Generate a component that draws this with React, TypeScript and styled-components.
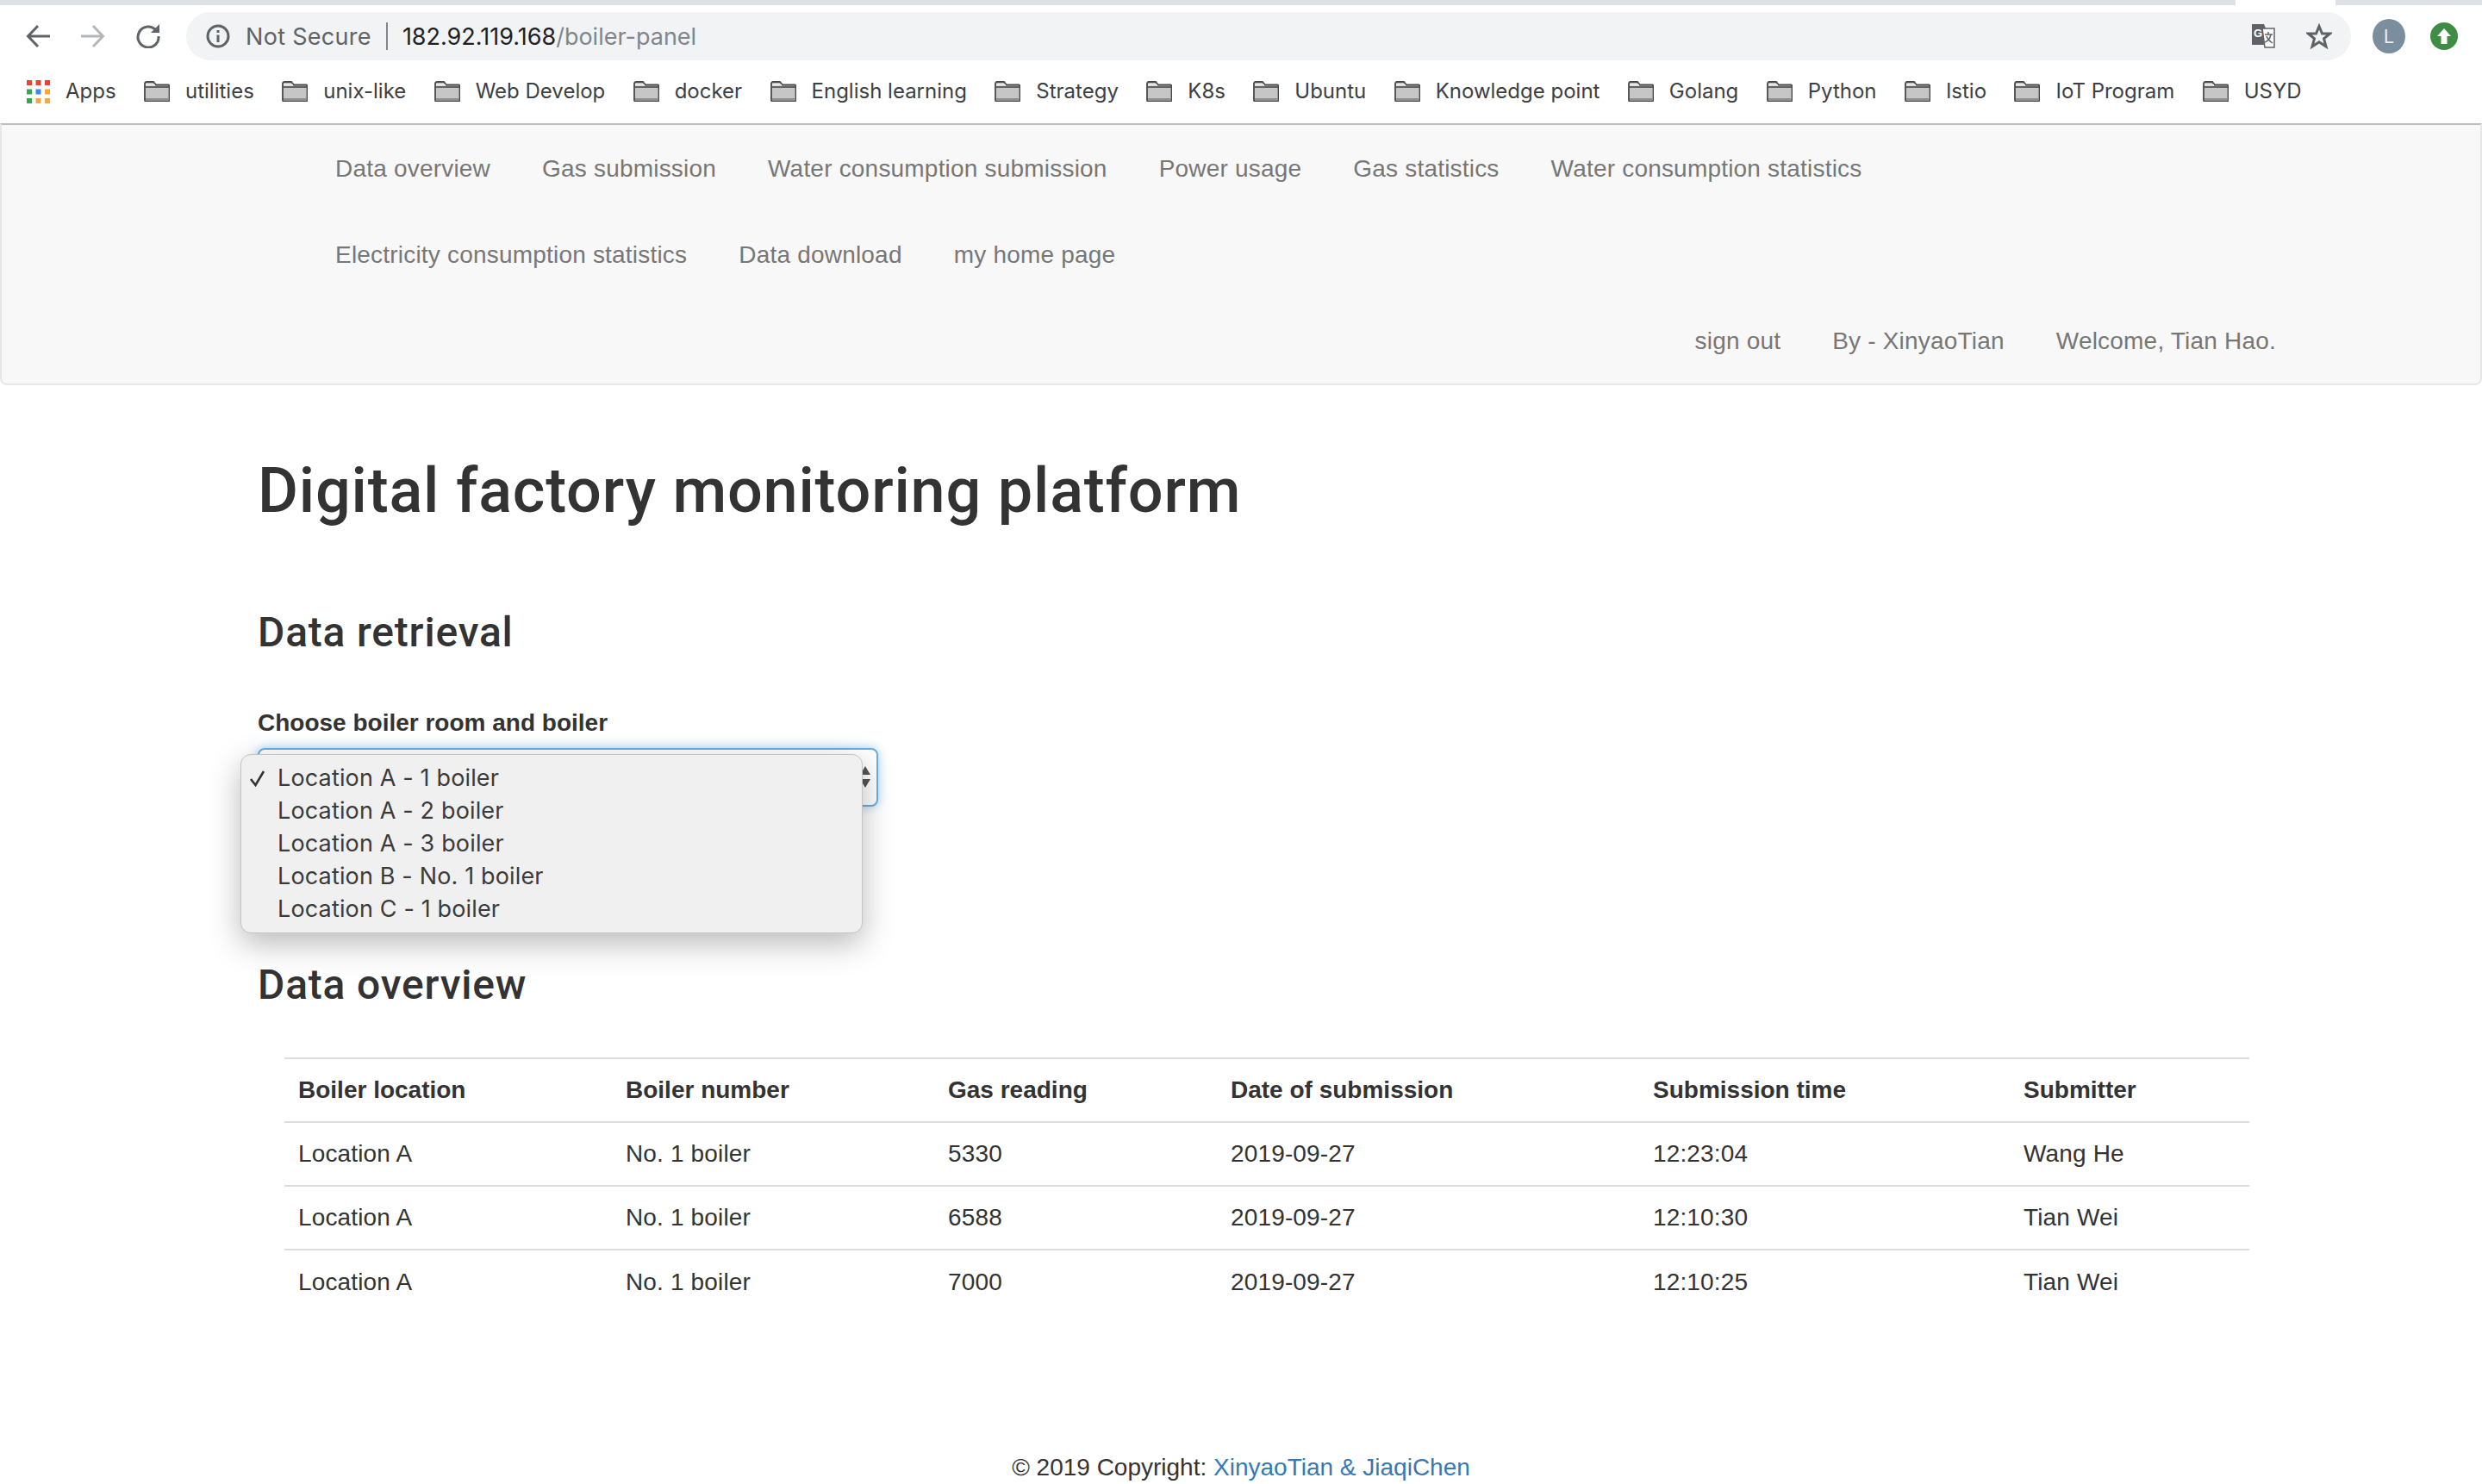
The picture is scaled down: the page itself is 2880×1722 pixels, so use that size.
import React from 'react';
import styled, { createGlobalStyle } from 'styled-components';

const GlobalStyle = createGlobalStyle`
  html, body {
    margin: 0;
    padding: 0;
    background: #fff;
    overflow: hidden;
  }
  body {
    font-family: "Liberation Sans", Arial, sans-serif;
    font-size: 28px;
    line-height: 40px;
    color: #333;
  }
  * { box-sizing: border-box; }
`;

const Page = styled.div`
  width: 2880px;
  height: 1722px;
  display: flex;
  flex-direction: column;
`;

// --- browser chrome ---

const TabStrip = styled.div`
  height: 6px;
  display: flex;
  background: #dee1e6;
  padding-left: 2594px;
`;

const ActiveTab = styled.div`
  width: 116px;
  height: 6px;
  background: #fff;
`;

const Toolbar = styled.div`
  height: 70px;
  padding: 8px 28px 0 30px;
  display: flex;
  align-items: flex-start;
  background: #fff;
`;

const NavIcons = styled.div`
  height: 56px;
  display: flex;
  align-items: center;
  gap: 36px;
  width: 186px;
`;

const Omnibox = styled.div`
  width: 2512px;
  height: 56px;
  border-radius: 28px;
  background: #f1f3f4;
  display: flex;
  align-items: center;
  padding: 0 20px 0 23px;
  font-family: Inter, "Noto Sans", sans-serif;
  font-size: 27px;
`;

const NotSecure = styled.span`
  color: #5f6368;
  margin: 2px 0 0 18px;
  font-size: 27px;
  letter-spacing: 0.3px;
`;

const Divider = styled.span`
  width: 2px;
  height: 32px;
  background: #80868b;
  margin: 0 17px;
`;

const Host = styled.span`
  color: #202124;
  margin-top: 2px;
`;

const UrlPath = styled.span`
  color: #80868b;
  margin-top: 2px;
`;

const OmniActions = styled.div`
  margin-left: auto;
  margin-right: 2px;
  display: flex;
  align-items: center;
  gap: 36px;
`;

const Avatar = styled.div`
  margin: 8px 0 0 25px;
  width: 38px;
  height: 40px;
  border-radius: 50%;
  background: #7b8e9e;
  color: #e8edf1;
  font-family: Inter, sans-serif;
  font-size: 22px;
  line-height: 40px;
  text-align: center;
`;

const UpdateBadge = styled.div`
  margin: 12px 0 0 29px;
  width: 32px;
  height: 32px;
  border-radius: 50%;
  background: #3f8c45;
  display: flex;
  align-items: center;
  justify-content: center;
`;

const BookmarkBar = styled.div`
  height: 67px;
  padding: 0 0 7px 31px;
  display: flex;
  align-items: center;
  background: #fff;
  font-family: Inter, "Noto Sans", sans-serif;
  font-size: 24px;
  color: #3c4043;
`;

const Bookmark = styled.div`
  display: flex;
  align-items: center;
  gap: 18px;
  margin-right: 32.4px;
`;

// --- site navbar ---

const Navbar = styled.nav`
  height: 304px;
  background: #f8f8f8;
  border: 2px solid #e7e7e7;
  border-top-color: #bdbdbd;
  border-radius: 0 0 8px 8px;
  padding-left: 357px;
  padding-right: 207px;
  font-size: 28px;
  line-height: 40px;
  color: #777;
  letter-spacing: 0.2px;
`;

const NavRow = styled.div<{ $right?: boolean }>`
  display: flex;
  justify-content: ${p => (p.$right ? 'flex-end' : 'flex-start')};
`;

const NavLink = styled.a`
  display: block;
  padding: 31px 30px 29px;
  white-space: nowrap;
`;

// --- content ---

const Container = styled.main`
  padding-left: 299px;
  padding-right: 270px;
  position: relative;
`;

const Title = styled.h1`
  margin: 83px 0 0;
  font-family: Roboto, "Liberation Sans", sans-serif;
  font-size: 72px;
  line-height: 79px;
  font-weight: 500;
  letter-spacing: 0.8px;
`;

const Heading = styled.h2<{ $top: number }>`
  margin: ${p => p.$top}px 0 0;
  font-family: Roboto, "Liberation Sans", sans-serif;
  font-size: 48px;
  line-height: 53px;
  font-weight: 500;
  letter-spacing: 0.8px;
`;

const FieldLabel = styled.label`
  display: block;
  margin-top: 59px;
  font-weight: 700;
  font-size: 28px;
  line-height: 40px;
`;

const SelectWrap = styled.div`
  position: relative;
  margin-top: 9px;
  width: 720px;
  height: 68px;
`;

const SelectBox = styled.div`
  height: 68px;
  border: 2px solid #66afe9;
  border-radius: 8px;
  background: #fff;
  box-shadow: 0 0 12px rgba(102, 175, 233, 0.6);
  display: flex;
  align-items: center;
  justify-content: flex-end;
  padding-right: 7px;
`;

const OptionMenu = styled.ul`
  position: absolute;
  left: -20px;
  top: 7px;
  width: 722px;
  height: 208px;
  margin: 0;
  padding: 8px 0 0;
  list-style: none;
  background: #f0f0f0;
  border: 1px solid #c4c4c4;
  border-radius: 12px;
  box-shadow: 0 12px 36px rgba(0, 0, 0, 0.28);
  font-family: Inter, "Noto Sans", sans-serif;
  font-size: 27px;
  letter-spacing: 0.15px;
  color: #3b3b3b;
  z-index: 2;
`;

const Option = styled.li`
  position: relative;
  height: 38px;
  line-height: 38px;
  padding-left: 42px;
`;

const CheckMark = styled.span`
  position: absolute;
  left: 9px;
  top: 0;
  display: flex;
  align-items: center;
  height: 38px;
`;

const DataTable = styled.table`
  margin: 58px 0 0 31px;
  width: 2280px;
  table-layout: fixed;
  border-collapse: collapse;
  font-size: 28px;
  line-height: 40px;
`;

const Col = styled.col<{ $w: number }>`
  width: ${p => p.$w}px;
`;

const HeadCell = styled.th`
  padding: 16px;
  height: 74px;
  text-align: left;
  font-weight: 700;
  border-top: 2px solid #ddd;
  border-bottom: 2px solid #ddd;
`;

const Cell = styled.td`
  padding: 16px;
  height: 74px;
  border-top: 2px solid #ddd;
  letter-spacing: 0.15px;
`;

const Footer = styled.footer`
  margin-top: auto;
  padding-bottom: 1px;
  height: 38px;
  line-height: 38px;
  text-align: center;
  font-size: 28px;
`;

const FooterLink = styled.a`
  color: #337ab7;
`;

// --- drawn icons ---

const BackIcon = ({ color }: { color: string }) => (
  <svg width="28" height="28" viewBox="0 0 28 28" fill="none" stroke={color} strokeWidth="3">
    <path d="M28 14H3M14 2L2.5 14L14 26" />
  </svg>
);

const ForwardIcon = ({ color }: { color: string }) => (
  <svg width="28" height="28" viewBox="0 0 28 28" fill="none" stroke={color} strokeWidth="3">
    <path d="M0 14H25M14 2L25.5 14L14 26" />
  </svg>
);

const ReloadIcon = () => (
  <svg width="28" height="28" viewBox="0 0 28 28" fill="none">
    <path d="M23 7A12 12 0 1 0 26 14" stroke="#5f6368" strokeWidth="3" />
    <path d="M17 10H27V0Z" fill="#5f6368" />
  </svg>
);

const InfoIcon = () => (
  <svg width="28" height="28" viewBox="0 0 28 28" fill="none" stroke="#5f6368" strokeWidth="3">
    <circle cx="14" cy="14" r="12" />
    <path d="M14 12.5V21M14 7V10" />
  </svg>
);

const TranslateIcon = () => (
  <svg width="28" height="30" viewBox="0 0 28 30">
    <path d="M1 1H15L25 25H1Z" fill="#5f6368" />
    <path d="M13 6H27V28H16Z" fill="#fff" stroke="#5f6368" strokeWidth="1.5" />
    <text x="3" y="16" fontFamily="Liberation Sans" fontWeight="700" fontSize="13" fill="#fff">G</text>
    <path d="M16 13H25M20 10V13M23 13C22 18 19 21 16 22M18 15C19 18 22 21 25 23" stroke="#5f6368" strokeWidth="1.5" fill="none" />
  </svg>
);

const StarIcon = () => (
  <svg width="30" height="30" viewBox="0 0 30 30" fill="none" stroke="#5f6368" strokeWidth="3">
    <path d="M15 3.5L18.5 12H27.5L20.5 17.8L23 27L15 21.8L7 27L9.5 17.8L2.5 12H11.5Z" />
  </svg>
);

const UpArrow = () => (
  <svg width="16" height="18" viewBox="0 0 16 18">
    <path d="M8 0L16 9H11.5V18H4.5V9H0Z" fill="#fff" />
  </svg>
);

const AppsGrid = () => {
  const colors = ['#ea4335', '#ea4335', '#ea4335', '#34a853', '#4285f4', '#f4a93a', '#34a853', '#f4a93a', '#f4a93a'];
  return (
    <svg width="27" height="27" viewBox="0 0 27 27">
      {colors.map((c, i) => (
        <rect key={i} x={(i % 3) * 10.5} y={Math.floor(i / 3) * 10.5} width="6" height="6" fill={c} />
      ))}
    </svg>
  );
};

const FolderIcon = () => (
  <svg width="30" height="24" viewBox="0 0 30 24">
    <path d="M1 3C1 1.8 1.8 1 3 1H11L14 4.5H28C29 4.5 29.5 5 29.5 6V22C29.5 23 29 23.5 28 23.5H2C1.4 23.5 1 23 1 22Z" fill="#c6c6c6" stroke="#4a4a4a" strokeWidth="1.8" />
    <path d="M1.5 7H29" stroke="#4a4a4a" strokeWidth="1.6" />
    <rect x="2" y="20" width="27" height="2.6" fill="#8f8f8f" />
    <path d="M2 4.5H13" stroke="#fff" strokeWidth="1.4" />
  </svg>
);

const SelectArrows = () => (
  <svg width="12" height="26" viewBox="0 0 12 26">
    <path d="M6 0L12 10H0ZM0 15H12L6 25Z" fill="#555" />
  </svg>
);

const Check = () => (
  <svg width="20" height="20" viewBox="0 0 20 20" fill="none" stroke="#333" strokeWidth="2.6">
    <path d="M2 11L7.5 18L17 2" />
  </svg>
);

const bookmarks = [
  'utilities', 'unix-like', 'Web Develop', 'docker', 'English learning', 'Strategy', 'K8s',
  'Ubuntu', 'Knowledge point', 'Golang', 'Python', 'Istio', 'IoT Program', 'USYD',
];

const options = [
  'Location A - 1 boiler',
  'Location A - 2 boiler',
  'Location A - 3 boiler',
  'Location B - No. 1 boiler',
  'Location C - 1 boiler',
];

const columns = [
  { label: 'Boiler location', width: 380 },
  { label: 'Boiler number', width: 374 },
  { label: 'Gas reading', width: 328 },
  { label: 'Date of submission', width: 490 },
  { label: 'Submission time', width: 430 },
  { label: 'Submitter', width: 278 },
];

const rows = [
  ['Location A', 'No. 1 boiler', '5330', '2019-09-27', '12:23:04', 'Wang He'],
  ['Location A', 'No. 1 boiler', '6588', '2019-09-27', '12:10:30', 'Tian Wei'],
  ['Location A', 'No. 1 boiler', '7000', '2019-09-27', '12:10:25', 'Tian Wei'],
];

const App: React.FC = () => (
  <Page>
    <GlobalStyle />
    <TabStrip><ActiveTab /></TabStrip>
    <Toolbar>
      <NavIcons>
        <BackIcon color="#5f6368" />
        <ForwardIcon color="#b4b7ba" />
        <ReloadIcon />
      </NavIcons>
      <Omnibox>
        <InfoIcon />
        <NotSecure>Not Secure</NotSecure>
        <Divider />
        <Host>182.92.119.168</Host>
        <UrlPath>/boiler-panel</UrlPath>
        <OmniActions>
          <TranslateIcon />
          <StarIcon />
        </OmniActions>
      </Omnibox>
      <Avatar>L</Avatar>
      <UpdateBadge><UpArrow /></UpdateBadge>
    </Toolbar>
    <BookmarkBar>
      <Bookmark><AppsGrid />Apps</Bookmark>
      {bookmarks.map(b => (
        <Bookmark key={b}><FolderIcon />{b}</Bookmark>
      ))}
    </BookmarkBar>

    <Navbar>
      <NavRow>
        <NavLink>Data overview</NavLink>
        <NavLink>Gas submission</NavLink>
        <NavLink>Water consumption submission</NavLink>
        <NavLink>Power usage</NavLink>
        <NavLink>Gas statistics</NavLink>
        <NavLink>Water consumption statistics</NavLink>
      </NavRow>
      <NavRow>
        <NavLink>Electricity consumption statistics</NavLink>
        <NavLink>Data download</NavLink>
        <NavLink>my home page</NavLink>
      </NavRow>
      <NavRow $right>
        <NavLink>sign out</NavLink>
        <NavLink>By - XinyaoTian</NavLink>
        <NavLink>Welcome, Tian Hao.</NavLink>
      </NavRow>
    </Navbar>

    <Container>
      <Title>Digital factory monitoring platform</Title>
      <Heading $top={98}>Data retrieval</Heading>
      <FieldLabel>Choose boiler room and boiler</FieldLabel>
      <SelectWrap>
        <SelectBox><SelectArrows /></SelectBox>
        <OptionMenu>
          {options.map((o, i) => (
            <Option key={o}>
              {i === 0 && <CheckMark><Check /></CheckMark>}
              {o}
            </Option>
          ))}
        </OptionMenu>
      </SelectWrap>
      <Heading $top={180}>Data overview</Heading>
      <DataTable>
        <colgroup>
          {columns.map(c => <Col key={c.label} $w={c.width} />)}
        </colgroup>
        <thead>
          <tr>
            {columns.map(c => <HeadCell key={c.label}>{c.label}</HeadCell>)}
          </tr>
        </thead>
        <tbody>
          {rows.map((r, i) => (
            <tr key={i}>
              {r.map((v, j) => <Cell key={j}>{v}</Cell>)}
            </tr>
          ))}
        </tbody>
      </DataTable>
    </Container>

    <Footer>
      © 2019 Copyright: <FooterLink>XinyaoTian &amp; JiaqiChen</FooterLink>
    </Footer>
  </Page>
);

export default App;
